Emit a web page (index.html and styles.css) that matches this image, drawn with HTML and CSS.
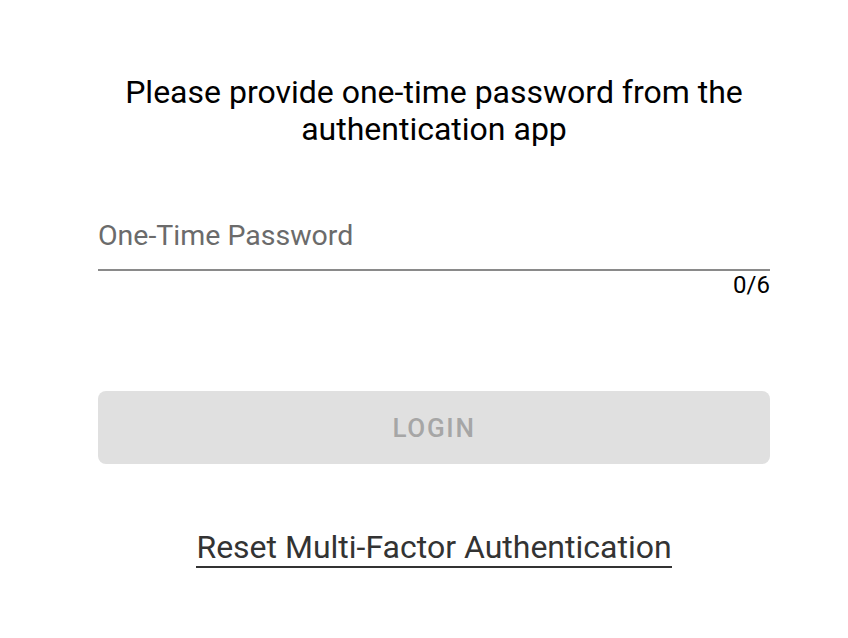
FILE: index.html
```html
<!DOCTYPE html>
<html lang="en">
<head>
  <meta charset="UTF-8" />
  <meta name="viewport" content="width=device-width, initial-scale=1.0"/>
  <title>One-Time Password</title>
  <link rel="stylesheet" href="styles.css">
</head>
<body>

<div class="page">
  <form class="otp-form" onsubmit="return false">
    <h2 class="otp-title">Please provide one-time password from the authentication app</h2>

    <!-- OTP field -->
    <div class="field">
      <input type="text" id="otp" class="field-input" maxlength="6" placeholder="One-Time Password">
      <div class="field-counter">0/6</div>
    </div>

    <button class="login-button" disabled>Login</button>

    <div class="reset">
      <a href="#" class="reset-link">Reset Multi-Factor Authentication</a>
    </div>
  </form>
</div>

</body>
</html>
```

FILE: styles.css
```css
/* Global Styling */
body {
  font-family: Roboto, 'Noto Sans', sans-serif;
  margin: 0;
  padding: 0;
  background: #fff;
  color: #000;
}

.page {
  padding-left: 20px;
}

.otp-form {
  width: 672px;
  margin: 0 auto;
  padding-top: 74px;
}

.otp-title {
  margin: 0;
  font-size: 32px;
  font-weight: 400;
  line-height: 37px;
  text-align: center;
}

/* Input */
.field {
  margin-top: 71px;
}

.field-input {
  display: block;
  width: 100%;
  height: 52px;
  box-sizing: border-box;
  border: none;
  border-bottom: 2px solid #8a8a8a;
  padding: 0 0 17px 0;
  font-family: inherit;
  font-size: 28.5px;
  line-height: 33px;
  color: #000;
  outline: none;
  background: transparent;
}

.field-input::placeholder {
  color: #6b6b6b;
}

.field-counter {
  text-align: right;
  font-size: 24px;
  line-height: 28px;
}

/* Button */
.login-button {
  display: block;
  width: 100%;
  height: 73px;
  margin-top: 92px;
  border: none;
  border-radius: 8px;
  background: #e0e0e0;
  color: #a6a6a6;
  font-family: inherit;
  font-size: 26px;
  font-weight: 500;
  letter-spacing: 1.7px;
  text-transform: uppercase;
}

/* Reset link */
.reset {
  margin-top: 64px;
  text-align: center;
  line-height: 0;
}

.reset-link {
  display: inline-block;
  color: #333;
  font-size: 32px;
  line-height: 38px;
  text-decoration: none;
  border-bottom: 2px solid #333;
}
```
